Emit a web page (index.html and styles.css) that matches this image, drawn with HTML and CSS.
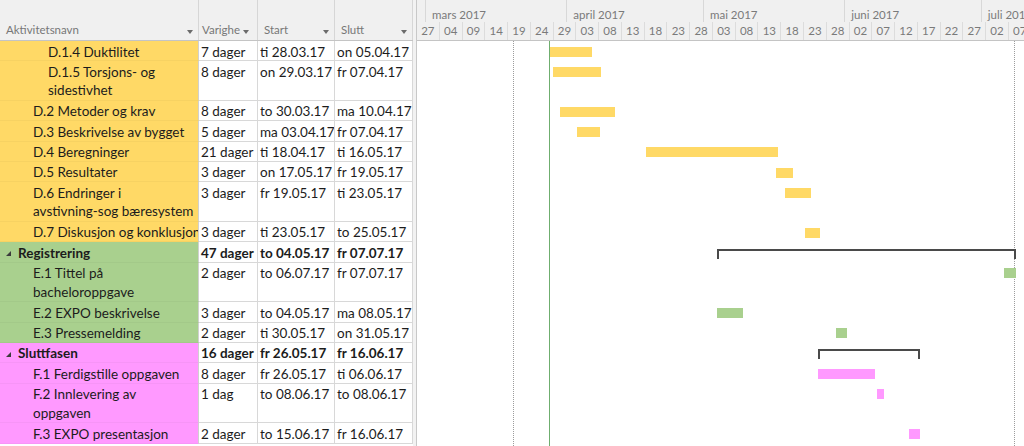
FILE: index.html
```html
<!DOCTYPE html>
<html lang="no">
<head>
<meta charset="utf-8">
<title>Gantt</title>
<link rel="stylesheet" href="styles.css">
</head>
<body>
<div class="app">
  <div class="table">
    <div class="thead">
      <div class="th">Aktivitetsnavn<span class="dd"></span></div>
      <div class="th th-dur">Varighe<span class="dd"></span></div>
      <div class="th">Start<span class="dd"></span></div>
      <div class="th">Slutt<span class="dd"></span></div>
    </div>

    <div class="row y"><div class="c name l3">D.1.4 Duktilitet</div><div class="c">7 dager</div><div class="c">ti 28.03.17</div><div class="c">on 05.04.17</div></div>
    <div class="row y tall"><div class="c name l3">D.1.5 Torsjons- og<br>sidestivhet</div><div class="c">8 dager</div><div class="c">on 29.03.17</div><div class="c">fr 07.04.17</div></div>
    <div class="row y"><div class="c name l2">D.2 Metoder og krav</div><div class="c">8 dager</div><div class="c">to 30.03.17</div><div class="c">ma 10.04.17</div></div>
    <div class="row y"><div class="c name l2">D.3 Beskrivelse av bygget</div><div class="c">5 dager</div><div class="c">ma 03.04.17</div><div class="c">fr 07.04.17</div></div>
    <div class="row y"><div class="c name l2">D.4 Beregninger</div><div class="c">21 dager</div><div class="c">ti 18.04.17</div><div class="c">ti 16.05.17</div></div>
    <div class="row y"><div class="c name l2">D.5 Resultater</div><div class="c">3 dager</div><div class="c">on 17.05.17</div><div class="c">fr 19.05.17</div></div>
    <div class="row y tall"><div class="c name l2">D.6 Endringer i<br>avstivning-sog bæresystem</div><div class="c">3 dager</div><div class="c">fr 19.05.17</div><div class="c">ti 23.05.17</div></div>
    <div class="row y"><div class="c name l2">D.7 Diskusjon og konklusjon</div><div class="c">3 dager</div><div class="c">ti 23.05.17</div><div class="c">to 25.05.17</div></div>
    <div class="row g sum"><div class="c name l1"><svg class="tri" width="5" height="5" viewBox="0 0 5 5"><polygon points="5,0 5,5 0,5"/></svg>Registrering</div><div class="c">47 dager</div><div class="c">to 04.05.17</div><div class="c">fr 07.07.17</div></div>
    <div class="row g tall"><div class="c name l2">E.1 Tittel på<br>bacheloroppgave</div><div class="c">2 dager</div><div class="c">to 06.07.17</div><div class="c">fr 07.07.17</div></div>
    <div class="row g"><div class="c name l2">E.2 EXPO beskrivelse</div><div class="c">3 dager</div><div class="c">to 04.05.17</div><div class="c">ma 08.05.17</div></div>
    <div class="row g"><div class="c name l2">E.3 Pressemelding</div><div class="c">2 dager</div><div class="c">ti 30.05.17</div><div class="c">on 31.05.17</div></div>
    <div class="row p sum"><div class="c name l1"><svg class="tri" width="5" height="5" viewBox="0 0 5 5"><polygon points="5,0 5,5 0,5"/></svg>Sluttfasen</div><div class="c">16 dager</div><div class="c">fr 26.05.17</div><div class="c">fr 16.06.17</div></div>
    <div class="row p"><div class="c name l2">F.1 Ferdigstille oppgaven</div><div class="c">8 dager</div><div class="c">fr 26.05.17</div><div class="c">ti 06.06.17</div></div>
    <div class="row p tall"><div class="c name l2">F.2 Innlevering av<br>oppgaven</div><div class="c">1 dag</div><div class="c">to 08.06.17</div><div class="c">to 08.06.17</div></div>
    <div class="row p"><div class="c name l2">F.3 EXPO presentasjon</div><div class="c">2 dager</div><div class="c">to 15.06.17</div><div class="c">fr 16.06.17</div></div>
  </div>

  <div class="splitter"></div>

  <div class="chart">
    <div class="tiers">
      <div class="months">
        <div class="m" style="width:9.1px"></div>
        <div class="m" style="width:141.2px">mars 2017</div>
        <div class="m" style="width:136.7px">april 2017</div>
        <div class="m" style="width:141.2px">mai 2017</div>
        <div class="m" style="width:136.7px">juni 2017</div>
        <div class="m m-last">juli 2017</div>
      </div>
      <div class="days">
        <div class="d">27</div><div class="d">04</div><div class="d">09</div><div class="d">14</div><div class="d">19</div><div class="d">24</div><div class="d">29</div><div class="d">03</div><div class="d">08</div><div class="d">13</div><div class="d">18</div><div class="d">23</div><div class="d">28</div><div class="d">03</div><div class="d">08</div><div class="d">13</div><div class="d">18</div><div class="d">23</div><div class="d">28</div><div class="d">02</div><div class="d">07</div><div class="d">12</div><div class="d">17</div><div class="d">22</div><div class="d">27</div><div class="d">02</div><div class="d">07</div>
      </div>
    </div>
    <div class="gbody">
      <div class="vline dotted" style="left:96px"></div>
      <div class="vline today" style="left:132px"></div>
      <div class="vline dotted" style="left:597px"></div>

      <div class="grow"><div class="bar by" style="left:133px;width:42px"></div></div>
      <div class="grow tall"><div class="bar by" style="left:136px;width:48px"></div></div>
      <div class="grow"><div class="bar by" style="left:143px;width:55px"></div></div>
      <div class="grow"><div class="bar by" style="left:160px;width:23px"></div></div>
      <div class="grow"><div class="bar by" style="left:229px;width:132px"></div></div>
      <div class="grow"><div class="bar by" style="left:359px;width:17px"></div></div>
      <div class="grow tall"><div class="bar by" style="left:368px;width:26px"></div></div>
      <div class="grow"><div class="bar by" style="left:388px;width:15px"></div></div>
      <div class="grow"><div class="bracket" style="left:300px;width:299px"></div></div>
      <div class="grow tall"><div class="bar bg" style="left:587px;width:12px"></div></div>
      <div class="grow"><div class="bar bg" style="left:300px;width:26px"></div></div>
      <div class="grow"><div class="bar bg" style="left:419px;width:11px"></div></div>
      <div class="grow"><div class="bracket" style="left:401px;width:102px"></div></div>
      <div class="grow"><div class="bar bp" style="left:401px;width:57px"></div></div>
      <div class="grow tall"><div class="bar bp" style="left:460px;width:7px"></div></div>
      <div class="grow"><div class="bar bp" style="left:492px;width:11px"></div></div>
    </div>
  </div>
</div>
</body>
</html>
```

FILE: styles.css
```css
* {
  box-sizing: border-box;
  margin: 0;
  padding: 0;
}

body {
  width: 1024px;
  height: 446px;
  overflow: hidden;
  background: #ffffff;
  font-family: Lato, "Open Sans", sans-serif;
  font-size: 13.5px;
  color: #1c1c1c;
}

.app {
  display: flex;
  height: 446px;
}

/* ---------- table ---------- */
.table {
  width: 413px;
  flex: none;
  display: flex;
  flex-direction: column;
}

.thead {
  display: grid;
  grid-template-columns: 199px 59px 77px 78px;
  height: 41px;
  flex: none;
  background: #f0f0f0;
  border-bottom: 1px solid #c4c4c4;
}

.th {
  display: flex;
  align-items: flex-end;
  justify-content: space-between;
  padding: 0 5px 1px 6px;
  border-right: 1px solid #d6d6d6;
  color: #777777;
  font-size: 11.5px;
  line-height: 18px;
  white-space: nowrap;
}

.th-dur {
  justify-content: flex-start;
  gap: 3px;
  padding-left: 3px;
}

.dd {
  width: 0;
  height: 0;
  margin-bottom: 5px;
  border-left: 3.5px solid transparent;
  border-right: 3.5px solid transparent;
  border-top: 4px solid #6b6b6b;
}

.row {
  display: grid;
  grid-template-columns: 199px 59px 77px 78px;
  height: 20.35px;
  flex: none;
}

.row.tall {
  height: 39.6px;
}

.c {
  padding: 1.5px 0 0 2px;
  line-height: 18.5px;
  border-right: 1px solid #d8d8d8;
  border-bottom: 1px solid #d8d8d8;
  white-space: nowrap;
  overflow: hidden;
}

.c.name {
  display: flex;
  align-items: flex-start;
  border-bottom-color: rgba(0, 0, 0, 0.03);
  border-right-color: #d0d0d0;
}

.l1 { padding-left: 6px; }
.l2 { padding-left: 33px; }
.l3 { padding-left: 48px; }

.y .name { background: #ffd966; }
.g .name { background: #a9d08e; }
.p .name { background: #ff99ff; }

.sum .c { font-weight: 700; }

.tri {
  flex: none;
  margin: 7.5px 7px 0 0;
  fill: #3c3c3c;
}

/* ---------- splitter ---------- */
.splitter {
  width: 4px;
  flex: none;
  background: #f2f2f2;
  border-right: 1px solid #c8c8c8;
}

/* ---------- chart ---------- */
.chart {
  flex: 1;
  display: flex;
  flex-direction: column;
  min-width: 0;
}

.tiers {
  height: 41px;
  flex: none;
  background: #f0f0f0;
  border-bottom: 1px solid #c4c4c4;
  display: flex;
  flex-direction: column;
  overflow: hidden;
}

.months {
  height: 22px;
  display: flex;
}

.m {
  flex: none;
  padding: 7px 0 0 6px;
  line-height: 15px;
  border-right: 1px solid #d8d8d8;
  color: #7a7a7a;
  font-size: 11.5px;
  white-space: nowrap;
  overflow: hidden;
}

.m-last {
  flex: 1;
  border-right: none;
}

.days {
  height: 18px;
  display: flex;
}

.d {
  flex: none;
  width: 22.78px;
  text-align: center;
  line-height: 16px;
  padding-top: 1px;
  border-right: 1px solid #dcdcdc;
  color: #7a7a7a;
  font-size: 11.5px;
}

.gbody {
  position: relative;
  flex: 1;
  display: flex;
  flex-direction: column;
}

.vline {
  position: absolute;
  top: 0;
  bottom: 0;
  width: 0;
}

.vline.dotted {
  border-left: 1px dotted #9c9c9c;
}

.vline.today {
  border-left: 1px solid #6fae6f;
}

.grow {
  position: relative;
  height: 20.35px;
  flex: none;
}

.grow.tall {
  height: 39.6px;
}

.bar {
  position: absolute;
  top: 5.6px;
  height: 10px;
}

.by { background: #ffd966; }
.bg { background: #a9d08e; }
.bp { background: #ff99ff; }

.bracket {
  position: absolute;
  top: 6.5px;
  height: 10px;
  border-style: solid;
  border-color: #4a4a4a;
  border-width: 2px 2.5px 0 2.5px;
}
```
